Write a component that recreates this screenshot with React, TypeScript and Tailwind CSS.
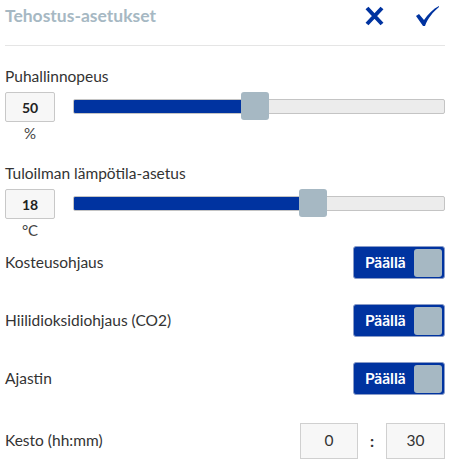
import React, { useState } from "react";

const NAVY = "#0033a0";

function Slider({ value, pct }: { value: number; pct: number }) {
  return (
    <div className="relative flex-1 h-[28px] flex items-center">
      <div className="w-full h-[15px] rounded-[2px] bg-[#ececec] border border-[#c4c4c4] overflow-hidden">
        <div className="h-full bg-[#0033a0]" style={{ width: `${pct}%` }} />
      </div>
      <div
        className="absolute top-0 w-[28px] h-[28px] rounded-[3px] bg-[#a6b8c3]"
        style={{ left: `calc(${pct}% - 1px)` }}
        aria-label={String(value)}
      />
    </div>
  );
}

function SliderRow({
  label,
  value,
  unit,
  pct,
}: {
  label: string;
  value: number;
  unit: string;
  pct: number;
}) {
  return (
    <div className="flex flex-col">
      <div className="text-[15.5px] text-[#333] leading-[20px]">{label}</div>
      <div className="flex items-start gap-[18px] mt-[6px]">
        <div className="flex flex-col items-center w-[50px]">
          <div className="w-[50px] h-[30px] bg-[#f7f7f7] border border-[#c8c8c8] rounded-[2px] flex items-center justify-center text-[14px] font-bold text-[#222]">
            {value}
          </div>
          <div className="text-[15px] text-[#444] leading-[18px] mt-[2px]">{unit}</div>
        </div>
        <Slider value={value} pct={pct} />
      </div>
    </div>
  );
}

function Toggle() {
  const [on, setOn] = useState(true);
  return (
    <button
      onClick={() => setOn(!on)}
      className="w-[92px] h-[33px] rounded-[3px] bg-[#0033a0] border border-[#8a9cc8] flex items-center pl-[11px] pr-[2px] justify-between"
    >
      <span className="text-white font-bold text-[15.5px]">{on ? "Päällä" : "Pois"}</span>
      <span className="w-[28px] h-[28px] rounded-[3px] bg-[#a6b8c3]" />
    </button>
  );
}

function ToggleRow({ label }: { label: string }) {
  return (
    <div className="flex items-center justify-between h-[33px]">
      <span className="text-[15.5px] text-[#333]">{label}</span>
      <Toggle />
    </div>
  );
}

export default function App() {
  return (
    <div
      className="w-[454px] h-[465px] bg-white px-[5px] pr-[9px]"
      style={{ fontFamily: "Lato, 'Open Sans', sans-serif" }}
    >
      <div className="flex items-center border-b border-[#e5e5e5] h-[46px]">
        <div className="flex-1 text-[17.5px] font-bold text-[#a6b8c3] pb-[13px]">Tehostus-asetukset</div>
        <div className="flex items-center gap-[30px] pr-[5px] pb-[13px]">
          <svg width="21" height="20" viewBox="0 0 21 20">
            <path d="M3 2 L18 18 M18 2 L3 18" stroke={NAVY} strokeWidth="4" />
          </svg>
          <svg width="25" height="20" viewBox="0 0 25 20">
            <path
              d="M1 10 L4 8 L9 14 C13 8 18 3 24 0 L24 1 C18 6 13 12 10 20 L8 20 Z"
              fill={NAVY}
            />
          </svg>
        </div>
      </div>

      <div className="mt-[20px]">
        <SliderRow label="Puhallinnopeus" value={50} unit="%" pct={45.5} />
      </div>
      <div className="mt-[21px]">
        <SliderRow label="Tuloilman lämpötila-asetus" value={18} unit="°C" pct={61} />
      </div>

      <div className="flex flex-col gap-[25px] mt-[7px]">
        <ToggleRow label="Kosteusohjaus" />
        <ToggleRow label="Hiilidioksidiohjaus (CO2)" />
        <ToggleRow label="Ajastin" />
      </div>

      <div className="flex items-center justify-between mt-[28px] h-[36px]">
        <span className="text-[15.5px] text-[#333]">Kesto (hh:mm)</span>
        <div className="flex items-center">
          <div className="w-[58px] h-[36px] bg-[#f7f7f7] border border-[#d0d0d0] flex items-center justify-center text-[15.5px] text-[#333]">
            0
          </div>
          <span className="w-[28px] text-center font-bold text-[16px] text-[#333]">:</span>
          <div className="w-[59px] h-[36px] bg-[#f7f7f7] border border-[#d0d0d0] flex items-center justify-center text-[15.5px] text-[#333]">
            30
          </div>
        </div>
      </div>
    </div>
  );
}
